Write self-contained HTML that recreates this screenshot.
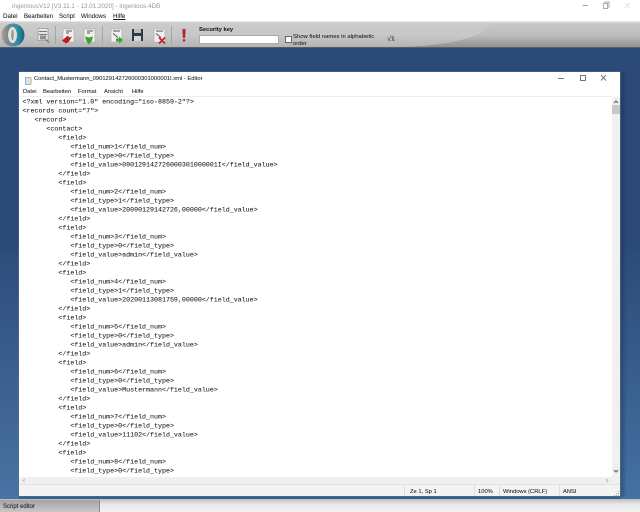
<!DOCTYPE html>
<html><head><meta charset="utf-8"><style>
html,body{margin:0;padding:0;width:640px;height:512px;overflow:hidden;background:#2b4a77}
#root{position:relative;width:640px;height:512px;overflow:hidden;filter:blur(0.35px);font-family:"Liberation Sans",sans-serif}
.a{position:absolute;white-space:nowrap}
.ui{font-size:6px;line-height:8px;color:#1a1a1a;-webkit-text-stroke:.05px #1a1a1a}
#code{position:absolute;left:22.5px;top:97px;font:6.65px/9px "Liberation Mono",monospace;color:#1c1c1c;-webkit-text-stroke:.07px #1c1c1c;white-space:pre;margin:0;transform:translateY(.4px)}
</style></head><body><div id="root">
<div class="a" style="left:0;top:0;width:640px;height:21px;background:#fff"></div>
<div class="a ui" style="left:12px;top:3px;color:#999;-webkit-text-stroke:0;font-size:6.3px">ingeniousV12 [V3.11.1 - 13.01.2020] - ingenious.4DB</div>
<div class="a ui" style="left:3px;top:13px;font-size:6.2px">Datei</div>
<div class="a ui" style="left:24px;top:13px;font-size:6px">Bearbeiten</div>
<div class="a ui" style="left:59px;top:13px;font-size:6.2px">Script</div>
<div class="a ui" style="left:81px;top:13px;font-size:6.2px">Windows</div>
<div class="a ui" style="left:113px;top:13px;font-size:6.2px;text-decoration:underline">Hilfe</div>
<svg class="a" style="left:580px;top:0" width="60" height="10"><path d="M2.500 5.500H8" stroke="#aaa"/><path d="M23.500 3.500h4v5h-4z M25 3V2h4v5h-1" stroke="#aaa" fill="none"/><path d="M45 3l5 5M50 3l-5 5" stroke="#e4e4e4"/></svg>
<div class="a" style="left:0;top:21px;width:640px;height:26px;background:linear-gradient(#e9e9e9 0,#c6c6c6 3px,#bdbdbd 55%,#929292 100%)"></div>
<div class="a" style="left:0;top:22px;width:490px;height:25px;background:#d0d0d0;opacity:.55;border-radius:0 0 95px 0/0 0 25px 0"></div>
<svg class="a" style="left:0;top:19px" width="30" height="30"><defs><linearGradient id="r" x1="0" x2="1"><stop offset="0" stop-color="#b0a090"/><stop offset=".3" stop-color="#78868a"/><stop offset=".65" stop-color="#2f93ad"/><stop offset="1" stop-color="#1f5f7c"/></linearGradient></defs><circle cx="13" cy="16" r="11.500" fill="url(#r)"/><ellipse cx="12.500" cy="16" rx="4.500" ry="8" fill="#e2e2e2"/><ellipse cx="12.500" cy="16" rx="1.300" ry="5.500" fill="#999"/></svg>
<svg class="a" style="left:0;top:21px" width="200" height="26">
<path d="M55.500 5v18M102.500 5v18M171.500 5v18" stroke="#a4a4a4"/>
<g><rect x="38" y="7.500" width="10" height="12" fill="#e6e6e6" stroke="#888" stroke-width=".6"/><path d="M39 10.500h8M39 13.500h8" stroke="#777"/><rect x="40" y="14.500" width="6" height="4" fill="#556" opacity=".6"/><path d="M46 18.500l3 3" stroke="#a87b30" stroke-width="1.300"/></g>
<g><rect x="63" y="8" width="11" height="13" fill="#f0f0f0" stroke="#aaa" stroke-width=".6"/><path d="M66 10h6M66 12h3" stroke="#555"/><path d="M62 19.500l6-5 1 2 3-1-3 5-3 2z" fill="#c3171f"/></g>
<g><rect x="84" y="8" width="11" height="13" fill="#f0f0f0" stroke="#aaa" stroke-width=".6"/><path d="M87 10h6M87 12h3" stroke="#555"/><path d="M85 15.500l4 1 4-1-1 4-3 4-3-4z" fill="#3da32e"/></g>
<g><rect x="111" y="8" width="11" height="13" fill="#f0f0f0" stroke="#aaa" stroke-width=".6"/><path d="M113 10h7M113 12.500l5 4" stroke="#555"/><path d="M116 17.500h3v-2l4 3.500-4 3.500v-2h-3z" fill="#38a62e"/></g>
<g><rect x="132" y="8" width="11" height="12" fill="#2d3a46"/><rect x="134" y="8" width="7" height="4" fill="#b7bec5"/><rect x="134" y="15" width="7" height="5" fill="#d5d8da"/></g>
<g><rect x="154" y="8" width="11" height="13" fill="#f0f0f0" stroke="#aaa" stroke-width=".6"/><path d="M156 10h7M156 12.500l5 4" stroke="#555"/><path d="M159 16.500l6 6M165 16.500l-6 6" stroke="#c8202a" stroke-width="1.800"/></g>
<path d="M182.800 8.500h2.400l-.5 8h-1.400z" fill="#b51d2c" stroke="#b51d2c" stroke-width=".8"/><rect x="182.900" y="18.200" width="2.300" height="2.300" fill="#b51d2c"/>
</svg>
<div class="a ui" style="left:199px;top:25.500px;font-weight:bold;font-size:5.800px">Security key</div>
<div class="a" style="left:199px;top:35px;width:78px;height:7px;background:#fff;border:1px solid #aaa"></div>
<div class="a" style="left:284.500px;top:36px;width:5px;height:5px;background:#fff;border:1px solid #666"></div>
<div class="a ui" style="left:293px;top:33.500px;font-size:5.900px;line-height:7px;white-space:normal;width:90px">Show field names in alphabetic order</div>
<div class="a ui" style="left:387px;top:35px;font-size:7.500px;font-family:'Liberation Serif',serif;color:#333">√x̄</div>

<div class="a" style="left:0;top:47px;width:640px;height:1px;background:#555e6a"></div>
<div class="a" style="left:0;top:48px;width:640px;height:451px;background:linear-gradient(#2b4a77 0,#2b4a77 50%,#38608f 100%)"></div>
<div class="a" style="left:0;top:250px;width:19px;height:249px;background:linear-gradient(#2d4d7b,#4a72a2)"></div>
<div class="a" style="left:621px;top:250px;width:19px;height:249px;background:linear-gradient(#2c4b79,#4471a3)"></div>
<div class="a" style="left:621px;top:72px;width:6px;height:425px;background:linear-gradient(90deg,rgba(20,35,60,.35),rgba(20,35,60,0))"></div>

<div class="a" style="left:19px;top:72px;width:601px;height:424px;background:#fff;box-shadow:0 0 0 .5px #5a6f8c"></div>
<svg class="a" style="left:24px;top:76px" width="10" height="10"><path d="M1.500 1.500h5v7h-5z" fill="#cfe3f2" stroke="#8db4d4"/><path d="M6 1.500h2v7h-2z" fill="#e3d2a8"/></svg>
<div class="a ui" style="left:34px;top:75px;font-size:5.800px;color:#222;line-height:8px">Contact_Mustermann_090129142726000301000001I.xml - Editor</div>
<svg class="a" style="left:555px;top:72px" width="65" height="14"><path d="M3 6.500h6" stroke="#777"/><path d="M25.500 3.500h5v5h-5z" fill="none" stroke="#777"/><path d="M46 3l5 5.500M51 3l-5 5.500" stroke="#777"/></svg>
<div class="a ui" style="left:23px;top:88px;font-size:5.800px">Datei</div>
<div class="a ui" style="left:43px;top:88px;font-size:5.800px">Bearbeiten</div>
<div class="a ui" style="left:78px;top:88px;font-size:5.800px">Format</div>
<div class="a ui" style="left:104px;top:88px;font-size:5.800px">Ansicht</div>
<div class="a ui" style="left:132px;top:88px;font-size:5.800px">Hilfe</div>
<div class="a" style="left:19px;top:96px;width:593px;height:1px;background:#eee"></div>
<pre id="code">&lt;?xml version="1.0" encoding="iso-8859-2"?&gt;
&lt;records count="7"&gt;
   &lt;record&gt;
      &lt;contact&gt;
         &lt;field&gt;
            &lt;field_num&gt;1&lt;/field_num&gt;
            &lt;field_type&gt;0&lt;/field_type&gt;
            &lt;field_value&gt;090129142726000301000001I&lt;/field_value&gt;
         &lt;/field&gt;
         &lt;field&gt;
            &lt;field_num&gt;2&lt;/field_num&gt;
            &lt;field_type&gt;1&lt;/field_type&gt;
            &lt;field_value&gt;20090129142726,00000&lt;/field_value&gt;
         &lt;/field&gt;
         &lt;field&gt;
            &lt;field_num&gt;3&lt;/field_num&gt;
            &lt;field_type&gt;0&lt;/field_type&gt;
            &lt;field_value&gt;admin&lt;/field_value&gt;
         &lt;/field&gt;
         &lt;field&gt;
            &lt;field_num&gt;4&lt;/field_num&gt;
            &lt;field_type&gt;1&lt;/field_type&gt;
            &lt;field_value&gt;20200113081759,00000&lt;/field_value&gt;
         &lt;/field&gt;
         &lt;field&gt;
            &lt;field_num&gt;5&lt;/field_num&gt;
            &lt;field_type&gt;0&lt;/field_type&gt;
            &lt;field_value&gt;admin&lt;/field_value&gt;
         &lt;/field&gt;
         &lt;field&gt;
            &lt;field_num&gt;6&lt;/field_num&gt;
            &lt;field_type&gt;0&lt;/field_type&gt;
            &lt;field_value&gt;Mustermann&lt;/field_value&gt;
         &lt;/field&gt;
         &lt;field&gt;
            &lt;field_num&gt;7&lt;/field_num&gt;
            &lt;field_type&gt;0&lt;/field_type&gt;
            &lt;field_value&gt;11102&lt;/field_value&gt;
         &lt;/field&gt;
         &lt;field&gt;
            &lt;field_num&gt;8&lt;/field_num&gt;
            &lt;field_type&gt;0&lt;/field_type&gt;</pre>
<div class="a" style="left:612px;top:97px;width:8px;height:380px;background:#f0f0f0"></div>
<div class="a" style="left:612px;top:105px;width:8px;height:9px;background:#c8c8c8"></div>
<svg class="a" style="left:612px;top:97px" width="8" height="380"><path d="M2 6l2-2 2 2M2 373l2 2 2-2" fill="none" stroke="#555"/></svg>
<div class="a" style="left:19px;top:477px;width:601px;height:7px;background:#f0f0f0"></div>
<svg class="a" style="left:19px;top:477px" width="601" height="7"><path d="M6 2l-2 1.500 2 1.500M587 2l2 1.500-2 1.500" fill="none" stroke="#bbb"/></svg>
<div class="a" style="left:19px;top:484px;width:601px;height:12px;background:#f3f3f3;border-top:1px solid #e2e2e2;box-sizing:border-box"></div>
<div class="a" style="left:474px;top:485px;width:1px;height:11px;background:#ddd"></div>
<div class="a" style="left:499px;top:485px;width:1px;height:11px;background:#ddd"></div>
<div class="a" style="left:559px;top:485px;width:1px;height:11px;background:#ddd"></div>
<div class="a" style="left:404px;top:485px;width:1px;height:11px;background:#ddd"></div>
<div class="a ui" style="left:410px;top:487.500px;font-size:5.800px">Ze 1, Sp 1</div>
<div class="a ui" style="left:478px;top:487.500px;font-size:5.800px">100%</div>
<div class="a ui" style="left:503px;top:487.500px;font-size:5.800px">Windows (CRLF)</div>
<div class="a ui" style="left:563px;top:487.500px;font-size:5.800px">ANSI</div>
<svg class="a" style="left:614px;top:490px" width="6" height="6"><path d="M4.500 1v1M2.500 3v1M4.500 3v1M.5 5v1M2.500 5v1M4.500 5v1" stroke="#aaa"/></svg>

<div class="a" style="left:0;top:499px;width:640px;height:13px;background:linear-gradient(#bdbdbd,#e8e8e8 40%,#f2f2f2)"></div>
<div class="a" style="left:0;top:499.500px;width:99px;height:12.500px;background:linear-gradient(#a4a4a4,#c8c8c8);border-right:1px solid #8a8a8a"></div>
<div class="a ui" style="left:3px;top:503px;font-size:6px">Script editor</div>
</div></body></html>
